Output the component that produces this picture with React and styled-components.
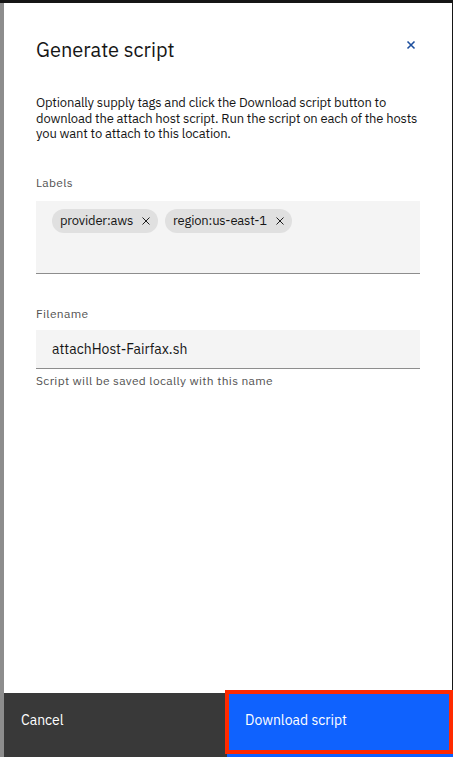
import styled, { createGlobalStyle } from "styled-components";

const GlobalStyle = createGlobalStyle`
  html, body {
    margin: 0;
    padding: 0;
    background: #161616;
  }
  body {
    font-family: "IBM Plex Sans", Roboto, "Noto Sans", sans-serif;
    color: #161616;
  }
`;

function CloseIcon({ size = 16, color = "currentColor", weight = 1.6 }) {
  return (
    <svg width={size} height={size} viewBox="0 0 16 16" fill="none">
      <path d="M4 4L12 12M12 4L4 12" stroke={color} strokeWidth={weight} />
    </svg>
  );
}

function Tag({ children }) {
  return (
    <TagPill>
      <span>{children}</span>
      <TagClose aria-label="Remove">
        <CloseIcon size={14} color="#161616" weight={1.1} />
      </TagClose>
    </TagPill>
  );
}

export default function App() {
  return (
    <>
      <GlobalStyle />
      <Page>
        <TopBar />
        <Row>
          <Scrim />
          <Modal>
            <Body>
              <Header>
                <Title>Generate script</Title>
                <CloseButton aria-label="Close">
                  <CloseIcon size={14} color="#1d4f9e" weight={1.8} />
                </CloseButton>
              </Header>
              <Description>
                Optionally supply tags and click the Download script button to
                download the attach host script. Run the script on each of the
                hosts you want to attach to this location.
              </Description>
              <Field>
                <Label>Labels</Label>
                <TagBox>
                  <Tag>provider:aws</Tag>
                  <Tag>region:us-east-1</Tag>
                </TagBox>
              </Field>
              <Field gap="8px">
                <Label>Filename</Label>
                <Input defaultValue="attachHost-Fairfax.sh" />
                <Helper>Script will be saved locally with this name</Helper>
              </Field>
            </Body>
            <Footer>
              <FooterButton kind="secondary">Cancel</FooterButton>
              <FooterButton kind="primary">
                Download script
                <Highlight />
              </FooterButton>
            </Footer>
          </Modal>
        </Row>
      </Page>
    </>
  );
}

const Page = styled.div`
  display: flex;
  flex-direction: column;
  width: 453px;
  height: 757px;
  overflow: hidden;
`;

const TopBar = styled.div`
  height: 3px;
  background: #161616;
  flex: none;
`;

const Row = styled.div`
  display: flex;
  flex: 1;
  min-height: 0;
`;

const Scrim = styled.div`
  width: 4px;
  flex: none;
  background: #8d8d8d;
`;

const Modal = styled.div`
  flex: 1;
  display: flex;
  flex-direction: column;
  background: #ffffff;
`;

const Body = styled.div`
  flex: 1;
  display: flex;
  flex-direction: column;
  padding: 33px 32px 0 32px;
  border-right: 1px solid #161616;
`;

const Header = styled.div`
  display: flex;
  justify-content: space-between;
  align-items: flex-start;
`;

const Title = styled.h2`
  margin: 0;
  font-size: 20px;
  line-height: 28px;
  font-weight: 400;
  color: #161616;
`;

const CloseButton = styled.button`
  border: none;
  background: none;
  padding: 0;
  margin: 1px 1px 0 0;
  width: 16px;
  height: 16px;
  display: flex;
  align-items: center;
  justify-content: center;
  cursor: pointer;
`;

const Description = styled.p`
  margin: 31px 0 0;
  font-size: 13px;
  line-height: 15.5px;
  letter-spacing: -0.16px;
  color: #161616;
`;

const Field = styled.div`
  display: flex;
  flex-direction: column;
  gap: ${({ gap }) => gap || "10px"};
  margin-top: 33px;
  &:last-child {
    margin-top: 32px;
  }
`;

const Label = styled.label`
  font-size: 12px;
  line-height: 16px;
  color: #525252;
  letter-spacing: 0.32px;
`;

const TagBox = styled.div`
  display: flex;
  flex-wrap: wrap;
  align-content: flex-start;
  gap: 7px;
  height: 64px;
  padding: 8px 16px 0;
  background: #f4f4f4;
  border-bottom: 1px solid #8d8d8d;
`;

const TagPill = styled.span`
  display: inline-flex;
  align-items: center;
  gap: 6px;
  height: 24px;
  padding: 0 5px 0 8px;
  border-radius: 12px;
  background: #e0e0e0;
  font-size: 13px;
  letter-spacing: -0.2px;
  color: #161616;
`;

const TagClose = styled.span`
  display: flex;
  align-items: center;
  justify-content: center;
  width: 14px;
  height: 14px;
`;

const Input = styled.input`
  box-sizing: border-box;
  width: 100%;
  height: 39px;
  border: none;
  border-bottom: 1px solid #8d8d8d;
  background: #f4f4f4;
  padding: 0 16px;
  font-family: inherit;
  font-size: 14px;
  color: #161616;
  outline: none;
`;

const Helper = styled.div`
  margin-top: -4px;
  font-size: 12px;
  line-height: 16px;
  color: #525252;
  letter-spacing: 0.32px;
`;

const Footer = styled.div`
  display: grid;
  grid-template-columns: 223px 1fr;
  height: 64px;
  flex: none;
`;

const FooterButton = styled.button`
  position: relative;
  border: none;
  margin: 0;
  display: flex;
  align-items: flex-start;
  padding: 18px 16px 0 ${({ kind }) => (kind === "primary" ? "18px" : "17px")};
  font-family: inherit;
  font-size: 14px;
  line-height: 18px;
  text-align: left;
  color: #ffffff;
  background: ${({ kind }) => (kind === "primary" ? "#0f62fe" : "#393939")};
  cursor: pointer;
`;

const Highlight = styled.span`
  position: absolute;
  top: -3px;
  left: -2px;
  right: 0;
  bottom: 3px;
  border: 4px solid #ff2a00;
  pointer-events: none;
`;
